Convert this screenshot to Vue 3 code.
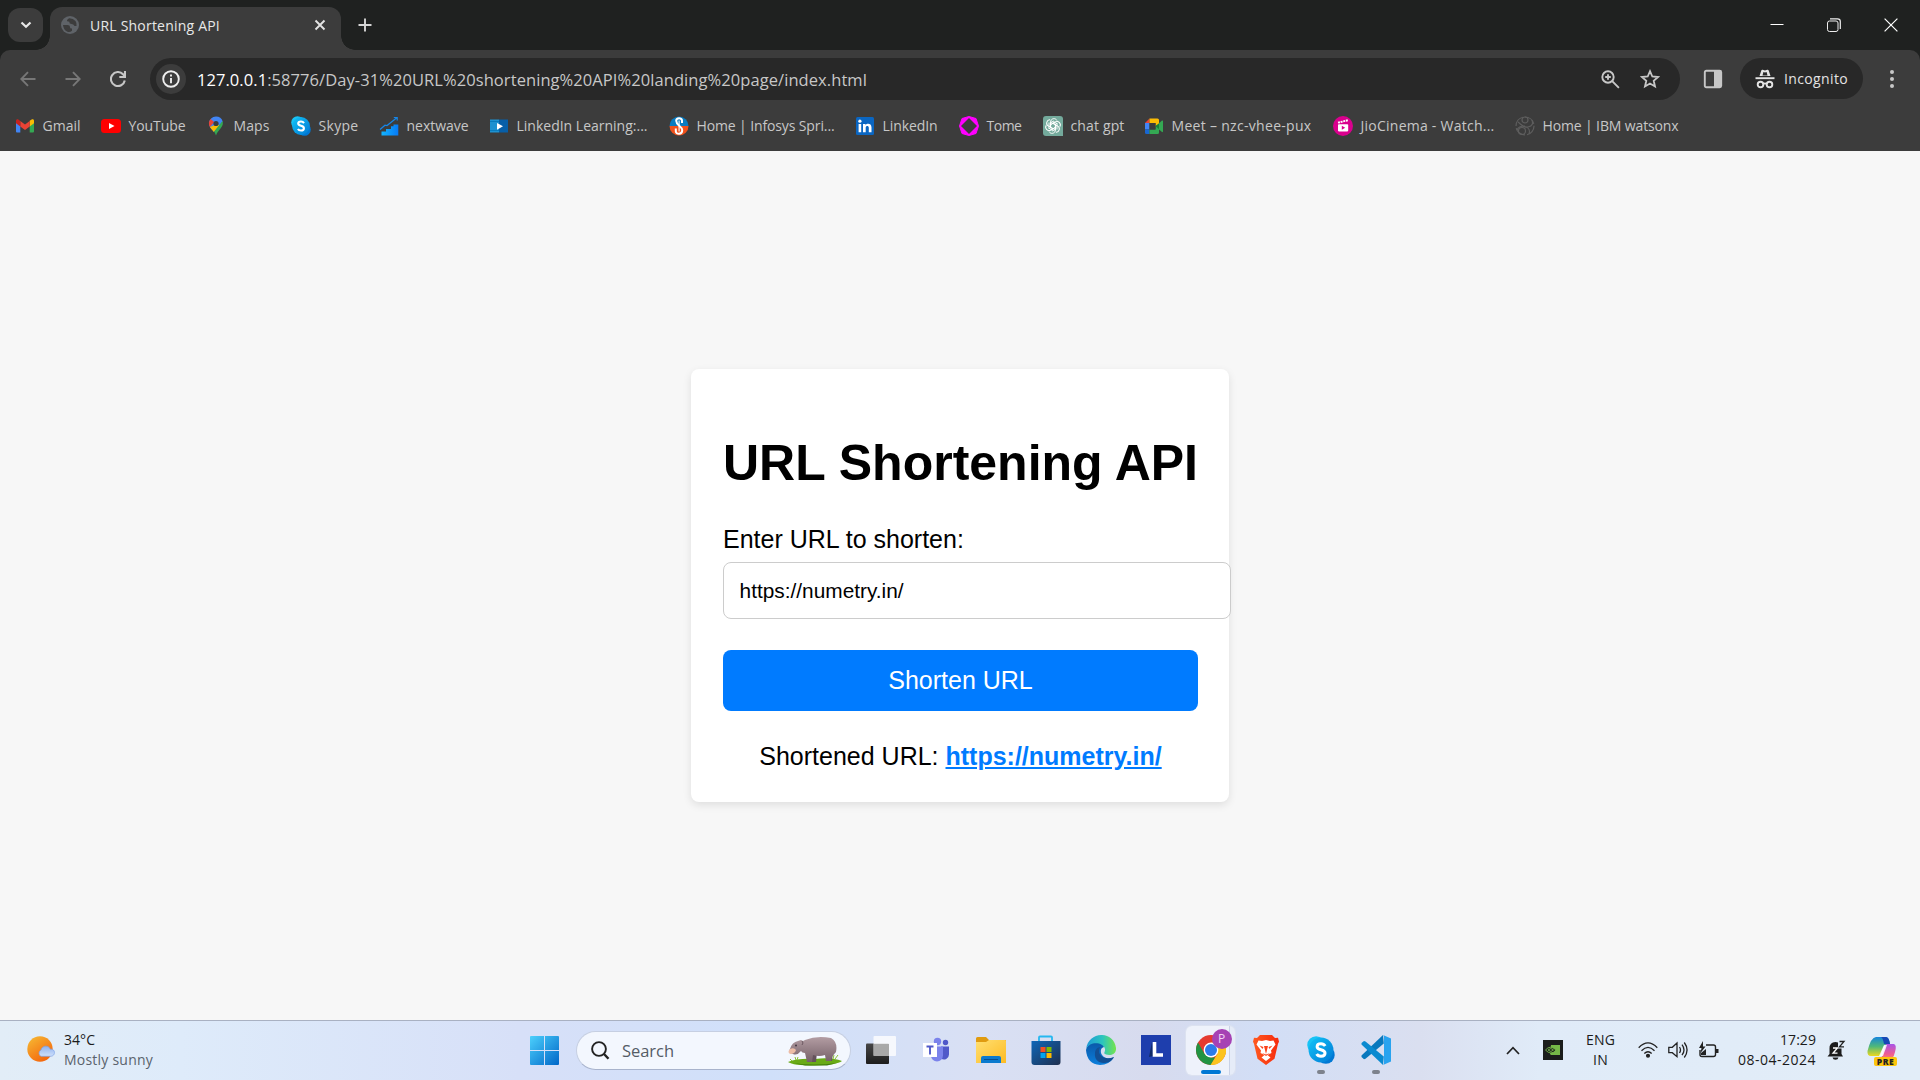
<script setup>
import { ref } from 'vue'

// Spreads a label over a given width by adjusting its tracking.
const vFit = {
  mounted(el, { value }) {
    const apply = () => {
      el.style.letterSpacing = '0px'
      const width = el.getBoundingClientRect().width
      el.style.letterSpacing = (value - width) / el.textContent.length + 'px'
    }
    apply()
    document.fonts?.ready.then(apply)
  }
}

const url = ref('https://numetry.in/')

const skypeArt = '<defs><linearGradient id="sk" x1="0" y1="0" x2="1" y2="1"><stop offset="0" stop-color="#12c4f8"/><stop offset="1" stop-color="#0078d4"/></linearGradient></defs><circle cx="6.5" cy="6.5" r="6.3" fill="#18c3f5"/><circle cx="13.5" cy="13.5" r="6.3" fill="#0078d4"/><circle cx="10" cy="10" r="8.9" fill="url(#sk)"/><path d="M13 7.1C12.3 6 11.200 5.500 10 5.500C8.300 5.500 7.200 6.300 7.200 7.600C7.200 10.500 12.900 9.100 12.900 12.200C12.900 13.600 11.700 14.500 10 14.500C8.600 14.500 7.500 14 6.900 12.900" fill="none" stroke="#fff" stroke-width="2.100"/>'

const bookmarks = [
  { label: 'Gmail', w: 86, t: 38, art: '<path d="M1 6v9.200c0 .8.500 1.300 1.300 1.300h3V9z" fill="#4285f4"/><path d="M19 6v9.200c0 .8-.5 1.300-1.300 1.300h-3V9z" fill="#34a853"/><path d="M14.700 4.700 17 3.300c1-.5 2 .2 2 1.300v2.600l-4.300 3.200z" fill="#fbbc04"/><path d="M5.300 10.400V4.900L10 8.400l4.700-3.500v5.500L10 13.900z" fill="#ea4335"/><path d="M1 7.200V4.600c0-1.100 1.200-1.800 2-1.300l2.300 1.600v5.500z" fill="#c5221f"/>' },
  { label: 'YouTube', w: 105, t: 57, art: '<rect x="0" y="3" width="20" height="14" rx="3.500" fill="#f00"/><path d="M8 7l5.500 3L8 13z" fill="#fff"/>' },
  { label: 'Maps', w: 85, t: 36, art: '<path d="M10 .5a7 7 0 0 1 6.700 5L8 16C6.500 13.500 3 11 3 7.500a7 7 0 0 1 7-7z" fill="#4285f4"/><path d="M4.600 3.100 8.200 6.100 3.900 11A7 7 0 0 1 4.600 3.100z" fill="#ea4335"/><path d="M8.200 9.300 3.900 11c1 2 2.700 3.200 4 5l6-7z" fill="#fbbc04"/><path d="M16.500 4.900C18.500 11 12 13 10 19.500c-.5-1.500-1-2.600-1.900-4z" fill="#34a853"/><circle cx="10" cy="7.500" r="2.600" fill="#3c3c3c"/>' },
  { label: 'Skype', w: 88, t: 40, art: skypeArt },
  { label: 'nextwave', w: 110, t: 62, art: '<defs><linearGradient id="nw"><stop offset="0" stop-color="#12b5ff"/><stop offset="1" stop-color="#0679f5"/></linearGradient></defs><path d="M2.500 19.500V15.500H7V13h5v-2.800h2.500V8.500h4.800v11z" fill="url(#nw)"/><path d="M1 13.500 6 9.200 8 9.500 17.500 2M14.800 1.500h3.400v3" fill="none" stroke="#1686e8" stroke-width="1.200"/>' },
  { label: 'LinkedIn Learning:...', w: 180, t: 131, art: '<path d="M1 3.500h9v13H1z" fill="#1d91d0"/><path d="M10 3.500h9v13h-9z" fill="#075fa8"/><path d="M1 5.500h9M1 14.500h9" stroke="#087bbd" stroke-width="1"/><path d="M8 7l6 3.300L8 13.700z" fill="#fff"/>' },
  { label: 'Home | Infosys Spri...', w: 186, t: 138, art: '<path d="M.5 10a9.500 9.500 0 0 1 19 0z" fill="#087cc1"/><path d="M.5 10a9.500 9.500 0 0 0 19 0z" fill="#f1511b"/><path d="M13 7V4.600c0-3.100-5.800-3.100-5.800.2 0 4.700 6 5 6 9.500 0 4.700-6.400 4.300-6.400 1v-2.800" fill="none" stroke="#fff" stroke-width="2"/><path d="M10.100 4.500v11" stroke="#fff" stroke-width="1.100"/>' },
  { label: 'LinkedIn', w: 104, t: 55, art: '<rect x="1" y="1" width="18" height="18" rx="1.500" fill="#0a66c2"/><path d="M3.600 8h2.600v8.300H3.600zM8 8h2.500v1.200c1.400-2.200 6-2 6 2.200v4.900h-2.700v-4.500c0-2.400-3.100-2.200-3.100 0v4.500H8z" fill="#fff"/><circle cx="4.900" cy="5.200" r="1.600" fill="#fff"/>' },
  { label: 'Tome', w: 84, t: 35, art: '<path d="M10 .5l7 2L19.500 10 17 17.500l-7 2-7-2L.5 10 3 2.500z" fill="#f0f" stroke="#f0f" stroke-linejoin="round"/><path d="M10 2 18 10l-8 8-8-8z" fill="#3c3c3c"/>' },
  { label: 'chat gpt', w: 101, t: 54, art: '<path d="M3 0h14a3 3 0 0 1 3 3v17H3a3 3 0 0 1-3-3V3a3 3 0 0 1 3-3z" fill="#74aa9c"/><g fill="none" stroke="#fff" stroke-width="1">' + [0, 60, 120, 180, 240, 300].map(a => `<path transform="rotate(${a} 10 10)" d="M7.600 11.400V6.200c0-4 5-4.700 6.300-1.700M7.600 8.600 11.500 6.300 15 8.300"/>`).join('') + '</g>' },
  { label: 'Meet – nzc-vhee-pux', w: 189, t: 140, art: '<path d="M1 7l4.500-4.500V7z" fill="#ea4335"/><path d="M1 7h4.500v6.500H1z" fill="#4285f4"/><path d="M1 13.500h4.500V18H2.500A1.500 1.500 0 0 1 1 16.500z" fill="#1967d2"/><path d="M5.500 2.500h8A1.500 1.500 0 0 1 15 4v4l-3.500 2.500V7h-6z" fill="#fbbc04"/><path d="M5.500 13.500h6v-3L15 8v8.500a1.500 1.500 0 0 1-1.500 1.500h-8z" fill="#34a853"/><path d="M5.500 7h6v6.500h-6z" fill="#3c3c3c"/><path d="M11.500 10 15 7.200v6z" fill="#188038"/><path d="M15 7.200 18 4.600c.5-.4 1 0 1 .5v10.400c0 .5-.5.900-1 .5l-3-2.500z" fill="#34a853"/>' },
  { label: 'JioCinema - Watch...', w: 182, t: 134, art: '<circle cx="10" cy="10" r="10" fill="#d9008d"/><rect x="5" y="8.200" width="10.200" height="7.200" rx=".8" fill="#fff"/><path d="M5 6.700 15 4.200" stroke="#fff" stroke-width="1.900" stroke-dasharray="2 .7"/><path d="M8.800 9.700l3.400 2-3.400 2z" fill="#d9008d"/>' },
  { label: 'Home | IBM watsonx', w: 170, t: 136, art: '<g fill="none" stroke="#5e5e5e" stroke-width="1.200"><circle cx="10" cy="10" r="9" stroke-dasharray="12 2"/><circle cx="10" cy="4" r="3"/><circle cx="7" cy="15" r="3.500"/><path d="M3 6c3 2 5 6 10 5s5-4 4-7M10 10c-3 0-7 1-8 4M11 11c3 1 4 4 3 7"/></g>' }
]

const apps = [
  { name: 'Task View', art: '<defs><linearGradient id="tv" x2="0" y2="1"><stop offset="0" stop-color="#464646"/><stop offset="1" stop-color="#1d1d1d"/></linearGradient></defs><rect x="0" y="8.500" width="23" height="20.500" rx="1" fill="url(#tv)"/><rect x="7.500" y="1" width="22.500" height="20" rx="1" fill="#fff" opacity=".78"/><path d="M7.500 9H23v12H7.500z" fill="#999" opacity=".75"/>' },
  { name: 'Teams', art: '<circle cx="16.500" cy="6.500" r="3.700" fill="#7b83eb"/><circle cx="24.500" cy="7.500" r="2.700" fill="#5059c9"/><path d="M20 11.500h8v8a5 5 0 0 1-8 4z" fill="#5059c9"/><path d="M10 11.500h12v9a6 6 0 0 1-12 0z" fill="#7b83eb"/><path d="M2 8h14v14H2z" fill="#fff"/><path d="M5.500 11.500h7M9 11.500v8" stroke="#5059c9" stroke-width="1.900"/>' },
  { name: 'File Explorer', art: '<defs><linearGradient id="fe" x2="1" y2="1"><stop offset="0" stop-color="#ffdf72"/><stop offset="1" stop-color="#fdbb22"/></linearGradient></defs><path d="M0 3.500Q0 2 1.500 2H10l3 3h17v6H0z" fill="#e09b10"/><path d="M0 7h10l3-2h16q1 0 1 1v22H0z" fill="url(#fe)"/><path d="M5 28v-5q0-2 2-2h16q2 0 2 2v5z" fill="#0b7ace"/><path d="M8 24.500h14" stroke="#064f91"/>' },
  { name: 'Microsoft Store', art: '<defs><linearGradient id="ms" x2="1" y2="1"><stop offset="0" stop-color="#0d66b8"/><stop offset="1" stop-color="#20304f"/></linearGradient></defs><path d="M8 7V2.500Q8 1.500 9 1.500h11q1 0 1 1V7" fill="none" stroke="#25b7f0" stroke-width="1.800"/><path d="M.5 6h29v21q0 3-3 3h-23q-3 0-3-3z" fill="url(#ms)"/><path d="M9.500 12h5v5h-5z" fill="#f25022"/><path d="M15.500 12h5v5h-5z" fill="#7fba00"/><path d="M9.500 18h5v5h-5z" fill="#00a4ef"/><path d="M15.500 18h5v5h-5z" fill="#ffb900"/>' },
  { name: 'Edge', art: '<defs><linearGradient id="e1" x1="0" x2="1"><stop offset="0" stop-color="#1d99d8"/><stop offset=".55" stop-color="#2cc5bd"/><stop offset="1" stop-color="#75e44c"/></linearGradient><linearGradient id="e2" x2="0" y2="1"><stop offset="0" stop-color="#0a56a6"/><stop offset="1" stop-color="#0b7fdc"/></linearGradient></defs><path d="M0 15C2 5 16 4 18 12c-5 1-4 9 2 11 3 1 5 .5 8-.8Q23 30 14 30 1 29 0 15z" fill="url(#e2)"/><path d="M9 18c-1 8 6 12 14 9 2-1 4-3 5-5-8 3-14 0-15-5-.3-3 1-4.500 2-5-4 0-6 3-6 6z" fill="#124f94"/><path d="M.2 14C2-4 28-5 30 13c.5 6-5 8-10 6.500-3.500-1-.5-2.500-1-5.500C17 7 4 6 .2 14z" fill="url(#e1)"/>' },
  { name: 'L', art: '<path d="M0 0h30v30H0z" fill="#1e3ead"/><path d="M11 7 8 22l4-1z" fill="#102a68"/><path d="M13.500 7v13H22" fill="none" stroke="#fff" stroke-width="3.600"/>' },
  { name: 'Chrome', active: true, art: '<circle cx="15" cy="15" r="15" fill="#e53a30"/><path d="M15 7.500h13A15 15 0 0 1 14 30l7.500-11.300z" fill="#fcc31e"/><path d="M2 7.500 8.500 18.700 15 22.500h4L14.500 30A15 15 0 0 1 2 7.500z" fill="#229342"/><circle cx="15" cy="15" r="7.400" fill="#fff"/><circle cx="15" cy="15" r="6" fill="#2d7bea"/>' },
  { name: 'Brave', art: '<defs><linearGradient id="br"><stop offset="0" stop-color="#ff5a20"/><stop offset="1" stop-color="#f62a0c"/></linearGradient></defs><path d="M9 0h12l3 3 3-.3 1 4-1 2-3.500 15L15 30l-8.500-6.300L3 8.700l-1-2 1-4L6 3z" fill="url(#br)"/><path d="M7.500 5.500 11 6l4-1 4 1 3.500-.5 2 4-4.500 6 .5 2.500-4 2 3 2.500-4.500 3.500L10.500 22.500l3-2.500-4-2 .5-2.500-4.500-6z" fill="#fff"/><path d="m8.500 10.500 4 1.500-1 2zM21.500 10.500l-4 1.500 1 2zM13 11l2 8 2-8zM11 18l4 1.500 4-1.500-4 3z" fill="#fb4119"/>' },
  { name: 'Skype', running: true, art: '<g transform="translate(1 1) scale(1.400)">' + skypeArt.replaceAll('"sk"', '"sk2"').replaceAll('#sk)', '#sk2)') + '</g>' },
  { name: 'VS Code', running: true, art: '<path d="m22 0 .8 8.500L4.500 23.800 3 24.300.5 22v-1.500z" fill="#0878bd"/><path d="M22 30l.8-8.500L4.500 6.500 3 6 .5 8v1.500z" fill="#0a8ad0"/><path d="m22 0 8 3.500v23L22 30q1-.5 1-2V2q0-1.500-1-2z" fill="#29a3ef"/>' }
]
</script>

<template>
  <div class="screen">
    <header class="tabs">
      <button class="tab-search" aria-label="Search tabs"><svg width="12" height="8" viewBox="0 0 12 8"><path d="m1.500 1.500 4.500 4.300 4.500-4.300" fill="none" stroke="#e8e8e8" stroke-width="2.200" /></svg></button>
      <div class="tab">
        <svg width="18" height="18" viewBox="0 0 18 18"><circle cx="9" cy="9" r="9" fill="#5f6368" /><path d="M2 9h4.500q2.500 0 2.500 2t2 1.500v2.300Q9 16.500 6.500 15.800 2.500 14 2 9zM8 2.200Q12 2 14.500 5q1.500 2 1 5h-2q-1-2-3-2-2.500-.2-2-1.500.2-1-1-1Q5.500 5.500 6 4z" fill="#3c3c3c" /></svg>
        <div class="tab-title"><span v-fit="130">URL Shortening API</span></div>
        <svg class="tab-x" width="12" height="12" viewBox="0 0 12 12"><path d="m1.500 1.500 9 9m0-9-9 9" stroke="#e3e3e3" stroke-width="1.900" /></svg>
      </div>
      <svg class="plus" width="14" height="14" viewBox="0 0 14 14"><path d="M7 .5v13M.5 7h13" stroke="#d5d5d5" stroke-width="1.900" /></svg>
      <div class="controls">
        <svg width="14" height="14" viewBox="0 0 14 14"><path d="M.5 6.500h13" stroke="#fff" /></svg>
        <svg width="14" height="14" viewBox="0 0 14 14" fill="none" stroke="#eee"><rect x=".5" y="3" width="10.500" height="10.500" rx="2" /><path d="M3 .8h7.500Q13.300.8 13.300 3.500V11" stroke-width="1.200" /></svg>
        <svg width="14" height="14" viewBox="0 0 14 14"><path d="m.6.6 12.800 12.800m0-12.800L.6 13.400" stroke="#fff" stroke-width="1.200" /></svg>
      </div>
    </header>

    <div class="chrome">
      <div class="toolbar">
        <div class="nav">
          <svg width="16" height="16" viewBox="0 0 16 16" fill="none" stroke="#777" stroke-width="1.900"><path d="M15.500 8h-14M8 1.200 1.300 8 8 14.800" /></svg>
          <svg width="16" height="16" viewBox="0 0 16 16" fill="none" stroke="#777" stroke-width="1.900"><path d="M.5 8h14M8 1.200 14.700 8 8 14.800" /></svg>
          <svg width="16" height="16" viewBox="0 0 16 16" fill="none" stroke="#c7c7c7" stroke-width="2.100"><path d="M14.800 9.500A7 7 0 1 1 13 3.200L15 5.300M15 0v6H9.300" /></svg>
        </div>
        <div class="omnibox">
          <div class="info"><svg width="18" height="18" viewBox="0 0 18 18"><circle cx="9" cy="9" r="7.800" fill="none" stroke="#eee" stroke-width="1.900" /><path d="M9 8v5.200M9 4.600v2" stroke="#eee" stroke-width="1.900" /></svg></div>
          <div class="address"><span v-fit="670"><b>127.0.0.1</b>:58776/Day-31%20URL%20shortening%20API%20landing%20page/index.html</span></div>
          <svg class="lens" width="19" height="19" viewBox="0 0 19 19" fill="none" stroke="#c7c7c7" stroke-width="1.900"><circle cx="7" cy="7" r="5.700" /><path d="m11.200 11.200 6.700 6.700M7 4.200v5.600M4.200 7h5.600" /></svg>
          <svg width="20" height="20" viewBox="0 0 20 20" fill="none" stroke="#c7c7c7" stroke-width="1.800"><path d="m10 2.200 2.300 5.300 5.800.5-4.400 3.800 1.300 5.700-5-3-5 3 1.300-5.700L1.900 8l5.800-.5z" /></svg>
        </div>
        <svg class="panel" width="20" height="20" viewBox="0 0 20 20"><rect x="1.800" y="1.800" width="16.400" height="16.400" rx="1.500" fill="none" stroke="#c7c7c7" stroke-width="1.900" /><path d="M11 2h7v16h-7z" fill="#c7c7c7" /></svg>
        <div class="incognito">
          <svg width="20" height="20" viewBox="0 0 20 20"><path d="M4.500 7 6.300 1.500Q6.700.4 7.800.8L10 1.500l2.200-.7q1.100-.4 1.500.7L15.500 7z" fill="#e3e3e3" /><path d="M7.500 6.500 8.400 3l1.600.6 1.600-.6.900 3.500z" fill="#282828" /><path d="M.5 9.200h19" stroke="#e3e3e3" stroke-width="1.900" /><g fill="none" stroke="#e3e3e3" stroke-width="1.900"><circle cx="5.500" cy="15.500" r="2.800" /><circle cx="14.500" cy="15.500" r="2.800" /><path d="M8.300 15q1.700-1.200 3.400 0" /></g></svg>
          <span v-fit="64">Incognito</span>
        </div>
        <svg class="dots" width="4" height="18" viewBox="0 0 4 18" fill="#c7c7c7"><circle cx="2" cy="2" r="2" /><circle cx="2" cy="9" r="2" /><circle cx="2" cy="16" r="2" /></svg>
      </div>
      <nav class="bookmarks">
        <a v-for="b in bookmarks" :key="b.label" :style="{ width: b.w + 'px' }">
          <svg width="20" height="20" viewBox="0 0 20 20" v-html="b.art" />
          <span v-fit="b.t">{{ b.label }}</span>
        </a>
      </nav>
    </div>

    <main class="page">
      <section class="card">
        <h1>URL Shortening API</h1>
        <label for="url">Enter URL to shorten:</label>
        <input id="url" v-model="url" type="text" spellcheck="false">
        <button>Shorten URL</button>
        <p>Shortened URL: <a href="#">https://numetry.in/</a></p>
      </section>
    </main>

    <footer class="taskbar">
      <div class="weather">
        <svg width="30" height="30" viewBox="0 0 30 30"><defs><linearGradient id="sun" x2=".7" y2="1"><stop offset="0" stop-color="#f6bd35" /><stop offset="1" stop-color="#f4640c" /></linearGradient><linearGradient id="cl" x2="0" y2="1"><stop offset="0" stop-color="#8fb2ee" /><stop offset="1" stop-color="#cfe0fb" /></linearGradient></defs><circle cx="13" cy="14" r="12.700" fill="url(#sun)" /><path d="M14 21.300a3.500 3.500 0 0 1 0-6.300c1-5 8-5 9.200-.8 5.500-.8 5.800 7 .3 7.100z" fill="url(#cl)" stroke="#7da2e8" stroke-width=".7" /></svg>
        <div><div class="line"><span v-fit="31">34°C</span></div><div class="line dim"><span v-fit="89">Mostly sunny</span></div></div>
      </div>
      <div class="center">
        <svg class="start" width="29" height="29" viewBox="0 0 29 29"><defs><linearGradient id="win" gradientUnits="userSpaceOnUse" x1="0" y1="0" x2="29" y2="29"><stop offset="0" stop-color="#4cd0fc" /><stop offset="1" stop-color="#0067c8" /></linearGradient></defs><path d="M1 0h13v14H0V1q0-1 1-1zM15 0h13q1 0 1 1v13H15zM0 15h14v14H1q-1 0-1-1zM15 15h14v13q0 1-1 1H15z" fill="url(#win)" /></svg>
        <div class="search">
          <svg width="19" height="19" viewBox="0 0 19 19" fill="none" stroke="#222"><circle cx="8" cy="8" r="6.900" stroke-width="1.900" /><path d="m13 13 4.500 4.800" stroke-width="2.400" /></svg>
          <div class="search-text"><span v-fit="52">Search</span></div>
          <svg width="56" height="30" viewBox="0 0 56 30"><defs><linearGradient id="hip" x2="0" y2="1"><stop offset="0" stop-color="#b39da3" /><stop offset="1" stop-color="#766169" /></linearGradient></defs><path d="M1 26q10-4 27-3 16-2 27 2-5 4-28 4.500Q6 29.500 1 26z" fill="#69aa16" /><path d="M6 27q20 3 44 0l-10 2.500H18z" fill="#437d0d" /><path d="m9 24-1-3m2 3 1-3m35 2 1-4m1 4 3-4M5 25l-2-2" stroke="#8bc234" /><path d="M24 16h6l-1 10h-5zM39 15h7l-1 10h-5z" fill="#65525b" /><path d="M18 4Q30-1 44 2q7 4 5 14-2 2-4 5l-1 4h-5l-1-6q-6 2-12 0l-1 7h-5l-2-9q-3 0-4-2-4 5-8 3-5-1-3-5Q5 6 11 5l3-1 2 1z" fill="url(#hip)" /><path d="M3 13q4-2 6 1-1 4-6 4-3-2 0-5z" fill="#edbda7" /><circle cx="9" cy="9.500" r="1" fill="#453941" /><path d="M15 5q2 2 0 4" fill="none" stroke="#6b5861" /></svg>
        </div>
        <div v-for="a in apps" :key="a.name" class="app" :class="{ active: a.active, running: a.running }" :title="a.name">
          <svg width="30" height="30" viewBox="0 0 30 30" v-html="a.art" />
          <span v-if="a.active" class="badge">P</span>
        </div>
      </div>
      <div class="tray">
        <svg class="up" width="14" height="9" viewBox="0 0 14 9"><path d="m1 8 6-6.300L13 8" fill="none" stroke="#222" stroke-width="1.700" /></svg>
        <svg class="nv" width="20" height="20" viewBox="0 0 20 20"><path d="M0 0h20v20H0z" fill="#1b1d1b" /><path d="M8 5h9v10H8l-1-1z" fill="#76b947" /><path d="M2.500 10Q7 4.500 13 10q-5 6-10.500 0zM5 10q3-3 5.500 0Q8 13 5 10z" fill="#1b1d1b" stroke="#76b947" stroke-width=".9" /></svg>
        <div class="lang"><div class="line"><span v-fit="29">ENG</span></div><div class="line"><span v-fit="15">IN</span></div></div>
        <div class="status">
          <svg width="20" height="16" viewBox="0 0 20 16" fill="none" stroke="#222" stroke-width="1.300"><path d="M.7 5.700q9.300-9.500 18.600 0M3.500 8.700q6.500-6.700 13 0M6.300 11.500q3.700-3.500 7.400 0" /><circle cx="10" cy="13.700" r="1.400" fill="#222" /></svg>
          <svg width="20" height="18" viewBox="0 0 20 18" fill="none" stroke="#222" stroke-width="1.300"><path d="M.8 6.300h3.500L9 2v13.700l-4.700-4H.8zM11.500 6q2 3 0 6M14 3.700q4 5.200 0 10.500M16.300 1.500q5.500 7.500 0 15" /></svg>
          <svg width="21" height="17" viewBox="0 0 21 17" fill="none" stroke="#222" stroke-width="1.400"><path d="M8 4h7.500q2 0 2 2v7.500q0 2-2 2H4q-2 0-2-2V9" /><path d="M18 8h2.500v4H18z" fill="#222" stroke="none" /><path d="M5 0 1 7h2.500L2.500 12l5-6.500H5zM3 14V12l5-4v6z" fill="#222" stroke="none" /></svg>
        </div>
        <div class="clock"><div class="line"><span v-fit="36">17:29</span></div><div class="line"><span v-fit="78">08-04-2024</span></div></div>
        <svg class="bell" width="19" height="20" viewBox="0 0 19 20"><path d="M2.500 14V8.500q0-6.500 6-6.500 1.500 0 2.500.5v6h3.500V14l1.500 2.500H.5zM5.500 17.500h6q-.5 2.300-3 2.300t-3-2.300z" fill="#1c1c1c" /><path d="M6 8h4.500L6 13.200h4.500" fill="none" stroke="#fff" stroke-width="1.300" /><path d="M12.500 1.500H17l-4.500 5.300H17" fill="none" stroke="#222" stroke-width="1.300" /></svg>
        <div class="copilot">
          <svg width="30" height="26" viewBox="0 0 30 26"><defs><linearGradient id="c1" x2="0" y2="1"><stop offset="0" stop-color="#1684dc" /><stop offset=".5" stop-color="#4fb879" /><stop offset="1" stop-color="#ecd91e" /></linearGradient><linearGradient id="c2" x2="0" y2="1"><stop offset="0" stop-color="#a855e8" /><stop offset=".6" stop-color="#f05c91" /><stop offset="1" stop-color="#fb9a55" /></linearGradient></defs><path d="M9 0h10q3 0 4 7l-6 2-4 10H4Q0 19 .5 14 4 0 9 0z" fill="url(#c1)" /><path d="M14 0h5q3 0 4 7h-6q-1-6-3-7z" fill="#1748b5" /><path d="M19 7h8q3 1 1 8-2 9-8 9H9q5 0 6-5z" fill="url(#c2)" /><path d="M17 8h3l-4 11h-4z" fill="#fff" opacity=".85" /></svg>
          <span class="pre">PRE</span>
        </div>
      </div>
    </footer>
  </div>
</template>

<style>
body { margin: 0; overflow: hidden; }
</style>

<style scoped>
* { box-sizing: border-box; }
svg { display: block; flex: none; }
.screen { width: 1920px; height: 1080px; display: flex; flex-direction: column; background: #1f2120; font-family: "Open Sans", "Noto Sans", sans-serif; font-size: 14px; overflow: hidden; }
span { display: inline-block; white-space: nowrap; }

.tabs { height: 50px; flex: none; display: flex; align-items: center; padding-left: 8px; }
.tab-search { width: 35px; height: 34px; border: 0; border-radius: 12px; background: #3c3c3c; padding: 0; display: flex; align-items: center; justify-content: center; }
.tab { position: relative; width: 291px; height: 43px; margin: 7px 0 0 7px; padding: 0 15px 7px 11px; background: #3c3c3c; border-radius: 12px 12px 0 0; display: flex; align-items: center; color: #e8e8e8; }
.tab::before, .tab::after { content: ""; position: absolute; bottom: 0; width: 14px; height: 14px; }
.tab::before { left: -14px; background: radial-gradient(circle at 0 0, transparent 13.500px, #3c3c3c 14px); }
.tab::after { right: -14px; background: radial-gradient(circle at 100% 0, transparent 13.500px, #3c3c3c 14px); }
.tab-title { margin-left: 11px; }
.tab-x { margin-left: auto; }
.plus { margin-left: 17px; }
.controls { margin-left: auto; display: flex; gap: 43px; padding-right: 22px; }

.chrome { height: 101px; flex: none; background: #3c3c3c; border-radius: 10px 10px 0 0; }
.toolbar { display: flex; align-items: center; height: 58px; padding-right: 26px; }
.nav { width: 150px; display: flex; gap: 29px; padding-left: 20px; }
.omnibox { width: 1531px; height: 42px; border-radius: 21px; background: #282828; display: flex; align-items: center; padding: 0 20px 0 6px; }
.info { width: 30px; height: 30px; border-radius: 50%; background: #3c3c3c; display: flex; align-items: center; justify-content: center; }
.address { flex: 1; margin-left: 11px; font-size: 16.500px; color: #c7c7c7; }
.address b { font-weight: 400; color: #fff; }
.lens { margin-right: 20px; }
.panel { margin-left: 23px; }
.incognito { width: 123px; height: 41px; margin: 0 0 1px 17px; border-radius: 21px; background: #282828; display: flex; align-items: center; gap: 9px; padding-left: 15px; color: #e3e3e3; }
.dots { margin-left: 27px; }
.bookmarks { display: flex; padding: 7px 0 0 15px; }
.bookmarks a { flex: none; display: flex; align-items: center; gap: 7.500px; height: 20px; color: #c7c7c7; }
.bookmarks a svg { position: relative; top: 1px; }

.page { flex: 1; background: #f7f7f7; display: flex; align-items: center; justify-content: center; font-family: Arial, "Liberation Sans", sans-serif; }
.card { width: 538px; padding: 31.250px 31px 31.250px 32px; background: #fff; border-radius: 8px; box-shadow: 0 3px 8px rgba(0, 0, 0, .1); color: #000; font-size: 25px; line-height: 28.750px; }
h1 { margin: 34.500px 0 33px; font-size: 50px; line-height: 57px; white-space: nowrap; }
label { display: block; margin-bottom: 8px; }
input { display: block; box-sizing: content-box; width: 100%; height: 24px; padding: 15.600px; margin-bottom: 30.500px; border: 1px solid #ccc; border-radius: 8px; font: 20.830px Arial, "Liberation Sans", sans-serif; color: #000; background: #fff; outline: 0; }
.card button { display: block; width: 100%; height: 61px; border: 0; border-radius: 8px; background: #007bff; color: #fff; font: 25px Arial, "Liberation Sans", sans-serif; }
p { margin: 31px 0 0; text-align: center; }
p a { color: #007bff; font-weight: 700; }

.taskbar { height: 60px; flex: none; display: flex; border-top: 1px solid #a9b1c2; background: linear-gradient(90deg, #e2edf7 0, #deebfa 180px, #d7e0f8 520px, #d0e0fa 770px, #d9e0f4 980px, #d7dbee 1150px, #d2def6 1265px, #dadff0 1420px, #e0ebf8 1540px, #e2edf8); color: #1b1b1b; }
.weather { width: 530px; display: flex; padding-left: 27px; }
.weather svg { margin: 14px 7px 0 0; }
.weather > div, .lang, .clock { padding-top: 9px; }
.line { height: 20px; line-height: 20px; }
.dim { color: #5a636c; }
.center { display: flex; }
.start { margin-top: 15px; }
.search { width: 275px; height: 39px; margin: 10px 2px 0 17px; border: 1px solid #c6cfe2; border-bottom-color: #a8b3cc; border-radius: 20px; background: #f3f7fe; display: flex; align-items: center; padding: 0 7px 0 14px; color: #555c66; }
.search-text { flex: 1; margin-left: 12px; font-size: 16.500px; }
.app { position: relative; width: 55px; height: 59px; padding: 14px 12.500px 0; }
.app.active::before { content: ""; position: absolute; left: 3px; top: 5px; width: 49px; height: 49px; border-radius: 6px; background: linear-gradient(90deg, #eef2fb 43px, #c9d2e6 43px, #c9d2e6 44px, #e6ecf8 44px); box-shadow: 0 0 0 1px #dce2f0; }
.app svg { position: relative; }
.app.active::after, .app.running::after { content: ""; position: absolute; bottom: 6px; left: 23.500px; width: 8px; height: 4px; border-radius: 2px; background: #7d828c; }
.app.active::after { left: 17.500px; width: 20px; background: #0078d4; }
.badge { position: absolute; left: 28.500px; top: 8px; width: 20px; height: 20px; border-radius: 50%; background: #a642b4; color: #f0d5f4; font-size: 12px; line-height: 20px; text-align: center; }
.tray { margin-left: auto; display: flex; padding-right: 23px; }
.up { margin: 25px 23px 0 0; }
.nv { margin: 19px 20px 0 0; }
.lang { width: 35px; text-align: center; }
.status { display: flex; gap: 10px; align-items: center; margin: 0 19px 2px 20px; }
.clock { width: 78px; text-align: right; }
.bell { margin: 19px 0 0 11px; }
.copilot { position: relative; width: 30px; margin: 16px 0 0 21px; }
.pre { position: absolute; left: 7px; top: 20px; width: 23px; height: 9px; border-radius: 2px; background: #fdc50b; color: #222; font-size: 8.500px; font-weight: 800; line-height: 9px; letter-spacing: .6px; text-align: center; }
</style>
